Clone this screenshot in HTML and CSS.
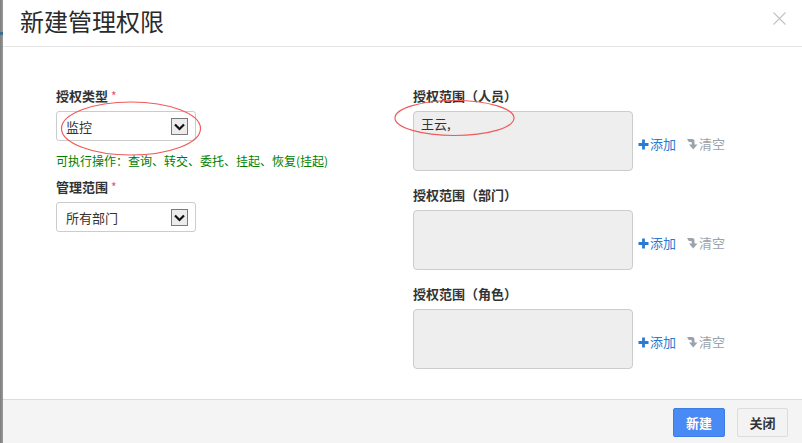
FILE: index.html
```html
<!DOCTYPE html>
<html lang="zh-CN">
<head>
<meta charset="utf-8">
<title>新建管理权限</title>
<link rel="stylesheet" href="styles.css">
</head>
<body>
<div class="shell">
  <div class="edge"><span class="edge-mark"></span></div>
  <div class="modal">
    <div class="modal-head">
      <h1 class="modal-title">新建管理权限</h1>
      <button class="close" type="button" aria-label="关闭">
        <svg width="13" height="13" viewBox="0 0 13 13"><path d="M0.5 0.5L12.5 12.5M12.5 0.5L0.5 12.5" stroke="#c4c4c4" stroke-width="1.2" fill="none"/></svg>
      </button>
    </div>
    <div class="modal-body">
      <div class="col col-left">
        <div class="label">授权类型 <span class="req">*</span></div>
        <div class="select">
          <span class="select-text">监控</span>
          <span class="select-btn"><svg width="11" height="8" viewBox="0 0 11 8"><path d="M1 1.5L5.5 6L10 1.5" stroke="#111" stroke-width="2.2" fill="none"/></svg></span>
        </div>
        <p class="hint">可执行操作：查询、转交、委托、挂起、恢复(挂起)</p>
        <div class="label label-2">管理范围 <span class="req">*</span></div>
        <div class="select">
          <span class="select-text">所有部门</span>
          <span class="select-btn"><svg width="11" height="8" viewBox="0 0 11 8"><path d="M1 1.5L5.5 6L10 1.5" stroke="#111" stroke-width="2.2" fill="none"/></svg></span>
        </div>
      </div>
      <div class="col col-right">
        <div class="scope">
          <div class="label">授权范围（人员）</div>
          <div class="scope-row">
            <div class="box">王云,</div>
            <a class="act add"><svg class="ico" width="11" height="11" viewBox="0 0 11 11"><path d="M5.5 0.5V10.5M0.5 5.5H10.5" stroke="#2a7ad3" stroke-width="2.8"/></svg>添加</a>
            <a class="act clear"><svg class="ico" width="11" height="12" viewBox="0 0 11 12"><path d="M0 1H5Q7.5 1 7.5 3.5V6.5H10.5L6.2 11.5L2 6.5H4.8V5Q4.8 4 3.8 4H1.8Z" fill="#9aa3ab"/></svg>清空</a>
          </div>
        </div>
        <div class="scope">
          <div class="label">授权范围（部门）</div>
          <div class="scope-row">
            <div class="box"></div>
            <a class="act add"><svg class="ico" width="11" height="11" viewBox="0 0 11 11"><path d="M5.5 0.5V10.5M0.5 5.5H10.5" stroke="#2a7ad3" stroke-width="2.8"/></svg>添加</a>
            <a class="act clear"><svg class="ico" width="11" height="12" viewBox="0 0 11 12"><path d="M0 1H5Q7.5 1 7.5 3.5V6.5H10.5L6.2 11.5L2 6.5H4.8V5Q4.8 4 3.8 4H1.8Z" fill="#9aa3ab"/></svg>清空</a>
          </div>
        </div>
        <div class="scope">
          <div class="label">授权范围（角色）</div>
          <div class="scope-row">
            <div class="box"></div>
            <a class="act add"><svg class="ico" width="11" height="11" viewBox="0 0 11 11"><path d="M5.5 0.5V10.5M0.5 5.5H10.5" stroke="#2a7ad3" stroke-width="2.8"/></svg>添加</a>
            <a class="act clear"><svg class="ico" width="11" height="12" viewBox="0 0 11 12"><path d="M0 1H5Q7.5 1 7.5 3.5V6.5H10.5L6.2 11.5L2 6.5H4.8V5Q4.8 4 3.8 4H1.8Z" fill="#9aa3ab"/></svg>清空</a>
          </div>
        </div>
      </div>
    </div>
    <div class="modal-foot">
      <button class="btn btn-primary" type="button">新建</button>
      <button class="btn btn-default" type="button">关闭</button>
    </div>
  </div>
  <svg class="marks" width="802" height="443" viewBox="0 0 802 443">
    <ellipse cx="131" cy="128.5" rx="69.5" ry="26.5" fill="none" stroke="#f05a5a" stroke-width="1.2"/>
    <ellipse cx="454.5" cy="118" rx="59.5" ry="17.5" fill="none" stroke="#f05a5a" stroke-width="1.2"/>
  </svg>
</div>
</body>
</html>
```
FILE: styles.css
```css
* { box-sizing: border-box; }
html, body { margin: 0; padding: 0; background: #fff; }
body {
  font-family: "Noto Sans CJK SC", "Liberation Sans", sans-serif;
  color: #333;
}
.shell {
  position: relative;
  width: 802px;
  height: 443px;
  display: flex;
  overflow: hidden;
}
.edge {
  width: 3px;
  flex: none;
  background: linear-gradient(to right, #7d7d7d, #9a9a9a);
  display: flex;
  flex-direction: column;
  padding-top: 32px;
}
.edge-mark {
  display: block;
  height: 3px;
  background: #3d6e8e;
}
.modal {
  flex: 1;
  display: flex;
  flex-direction: column;
  background: #fff;
}
.modal-head {
  height: 47px;
  flex: none;
  border-bottom: 1px solid #e5e5e5;
  display: flex;
  align-items: flex-start;
  justify-content: space-between;
  padding: 0 16px 0 17px;
}
.modal-title {
  margin: 0;
  font-size: 24px;
  font-weight: normal;
  line-height: 42px;
  color: #2a2a2a;
}
.close {
  margin-top: 12px;
  padding: 0;
  border: 0;
  background: none;
  width: 13px;
  height: 13px;
  display: flex;
}
.modal-body {
  flex: 1;
  display: flex;
  padding: 40px 0 0 53px;
}
.col-left {
  width: 357px;
  flex: none;
}
.col-right { flex: 1; }
.label {
  font-size: 13px;
  font-weight: bold;
  line-height: 18px;
  color: #333;
  margin-bottom: 6px;
}
.label-2 { margin-top: 8px; }
.req {
  color: #f24a7a;
  font-size: 12px;
  font-weight: normal;
}
.select {
  width: 140px;
  height: 30px;
  border: 1px solid #ccc;
  border-radius: 3px;
  display: flex;
  align-items: center;
  justify-content: space-between;
  padding: 0 7px 0 9px;
  font-size: 13px;
  color: #333;
}
.select-btn {
  width: 17px;
  height: 17px;
  border: 1px solid #7a7a7a;
  background: #ececec;
  display: flex;
  align-items: center;
  justify-content: center;
  margin-top: 1px;
}
.hint {
  margin: 11px 0 0;
  font-size: 12px;
  line-height: 18px;
  color: #008000;
}
.scope + .scope { margin-top: 15px; }
.scope-row {
  display: flex;
  align-items: center;
}
.box {
  width: 220px;
  height: 60px;
  flex: none;
  background: #eee;
  border: 1px solid #ccc;
  border-radius: 4px;
  padding: 3px 7px;
  font-size: 13px;
  line-height: 18px;
  color: #333;
}
.act {
  display: flex;
  align-items: center;
  font-size: 13px;
  line-height: 18px;
  margin-top: 6px;
}
.add { color: #2a7ad3; margin-left: 5px; }
.clear { color: #9aa3ab; margin-left: 11px; }
.ico { margin-right: 1px; }
.modal-foot {
  height: 44px;
  flex: none;
  border-top: 1px solid #dcdcdc;
  background: #f4f4f4;
  display: flex;
  justify-content: flex-end;
  align-items: flex-start;
  padding: 8px 14px 0 0;
  gap: 12px;
}
.btn {
  height: 29px;
  font-family: "Noto Sans CJK SC", "Liberation Sans", sans-serif;
  font-size: 13px;
  font-weight: bold;
  border-radius: 2px;
  padding: 0;
  line-height: 27px;
}
.btn-primary {
  width: 52px;
  background: #4a8af4;
  border: 1px solid #3b7de8;
  color: #fff;
}
.btn-default {
  width: 51px;
  background: #f3f3f3;
  border: 1px solid #dcdcdc;
  color: #333;
}
.marks {
  position: absolute;
  left: 0;
  top: 0;
  pointer-events: none;
}
```
